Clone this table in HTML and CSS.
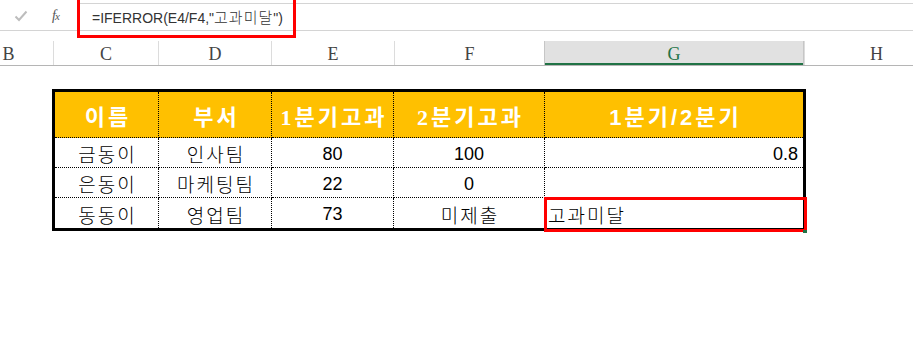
FILE: index.html
```html
<!DOCTYPE html>
<html lang="ko">
<head>
<meta charset="utf-8">
<link rel="stylesheet" href="styles.css">
</head>
<body>
<div class="sheet">
  <div class="fbar">
    <div class="tools">
      <svg class="check" width="14" height="12" viewBox="0 0 14 12"><path d="M1.5 6.5 L5 10 L12.5 1.5" fill="none" stroke="#bdbdbd" stroke-width="2"/></svg>
      <span class="fx">f<small>x</small></span>
    </div>
    <div class="input">=IFERROR(E4/F4,"<span class="ko">고과미달</span>")</div>
    <div class="hl hl-formula"></div>
  </div>

  <div class="colheads">
    <div class="ch ch-b">B</div>
    <div class="ch ch-c">C</div>
    <div class="ch ch-d">D</div>
    <div class="ch ch-e">E</div>
    <div class="ch ch-f">F</div>
    <div class="ch ch-g sel">G</div>
    <div class="ch ch-h">H</div>
  </div>

  <div class="tablewrap">
    <div class="grid">
      <div class="c h ser">이름</div>
      <div class="c h ser">부서</div>
      <div class="c h ser">1분기고과</div>
      <div class="c h ser">2분기고과</div>
      <div class="c h sans last">1분기/2분기</div>

      <div class="c ko">금동이</div>
      <div class="c ko">인사팀</div>
      <div class="c num">80</div>
      <div class="c num">100</div>
      <div class="c num right last">0.8</div>

      <div class="c ko">은동이</div>
      <div class="c ko">마케팅팀</div>
      <div class="c num">22</div>
      <div class="c num">0</div>
      <div class="c last"></div>

      <div class="c ko bot">동동이</div>
      <div class="c ko bot">영업팀</div>
      <div class="c num bot">73</div>
      <div class="c ko bot">미제출</div>
      <div class="c ko left bot last">고과미달</div>
    </div>
    <div class="hl hl-cell"></div>
    <div class="handle"></div>
  </div>
</div>
</body>
</html>
```

FILE: styles.css
```css
html, body {
  margin: 0;
  padding: 0;
  background: #ffffff;
}
.sheet {
  width: 913px;
  height: 338px;
  overflow: hidden;
  position: relative;
}
.fbar {
  position: relative;
  display: flex;
  height: 31px;
  box-sizing: border-box;
  border-bottom: 1px solid #d4d4d4;
}
.tools {
  width: 77px;
  display: flex;
  align-items: center;
  padding-top: 2px;
  box-sizing: border-box;
}
.check {
  margin-left: 14px;
}
.fx {
  margin-left: 24px;
  font-family: "Liberation Serif", serif;
  font-style: italic;
  font-size: 14px;
  color: #555;
  letter-spacing: -1px;
}
.fx small {
  font-size: 11px;
}
.input {
  flex: 1;
  margin-top: 3px;
  border-top: 1px solid #d4d4d4;
  padding-left: 15px;
  font-family: "Liberation Sans", Arial, sans-serif;
  font-size: 14px;
  color: #333;
  line-height: 25px;
}
.input .ko {
  font-family: "Noto Sans CJK KR", sans-serif;
  font-size: 15px;
  font-weight: 300;
  letter-spacing: 1px;
}
.hl {
  position: absolute;
  border: 3px solid #ff0000;
  box-sizing: border-box;
}
.hl-formula {
  left: 77px;
  top: -3px;
  width: 219px;
  height: 41px;
}
.colheads {
  display: flex;
  margin-top: 10px;
  height: 25px;
  box-sizing: border-box;
  border-bottom: 1px solid #b5b5b5;
}
.ch {
  flex: none;
  box-sizing: border-box;
  border-left: 1px solid #dcdcdc;
  display: flex;
  align-items: center;
  justify-content: center;
  padding-top: 2px;
  font-family: "Liberation Serif", serif;
  font-size: 18px;
  color: #444;
}
.ch-b { width: 89px; margin-left: -36px; border-left: none; }
.ch-c { width: 105px; }
.ch-d { width: 113px; }
.ch-e { width: 123px; }
.ch-f { width: 150px; }
.ch-g { width: 260px; }
.ch-h { width: 144px; }
.ch.sel {
  background: #e1e1e1;
  color: #217346;
  border-left: 1px solid #c6c6c6;
  border-right: 1px solid #c6c6c6;
  box-shadow: inset 0 -2px 0 #217346;
}
.tablewrap {
  position: relative;
  margin-top: 23px;
  margin-left: 52px;
  width: 754px;
}
.grid {
  display: grid;
  grid-template-columns: 104px 113px 122px 151px 258px;
  grid-template-rows: 46px 30px 30px 30px;
  border: 3px solid #000;
}
.c {
  box-sizing: border-box;
  border-right: 1px dotted #000;
  border-bottom: 1px dotted #000;
  display: flex;
  align-items: center;
  justify-content: center;
  padding-top: 2px;
  color: #000;
}
.c.last { border-right: none; }
.c.bot { border-bottom: none; }
.c.h {
  background: #ffc000;
  color: #ffffff;
  font-weight: 700;
  padding-top: 0;
}
.c.ser {
  font-family: "Liberation Serif", "Noto Sans CJK KR", serif;
  font-size: 22px;
  letter-spacing: 3px;
  padding-left: 3px;
}
.c.sans {
  font-family: "Liberation Sans", "Noto Sans CJK KR", sans-serif;
  font-size: 22px;
  letter-spacing: 3px;
  padding-left: 3px;
}
.c.ko {
  font-family: "Noto Sans CJK KR", sans-serif;
  font-size: 19px;
  font-weight: 300;
  letter-spacing: 2px;
  padding-left: 2px;
}
.c.num {
  font-family: "Liberation Sans", Arial, sans-serif;
  font-size: 18px;
  padding-top: 3px;
}
.c.right {
  justify-content: flex-end;
  padding-right: 5px;
}
.c.left {
  justify-content: flex-start;
  padding-left: 3px;
}
.hl-cell {
  left: 492px;
  top: 108px;
  width: 263px;
  height: 35px;
}
.handle {
  position: absolute;
  left: 751px;
  top: 141px;
  width: 4px;
  height: 3px;
  background: #217346;
}
```
